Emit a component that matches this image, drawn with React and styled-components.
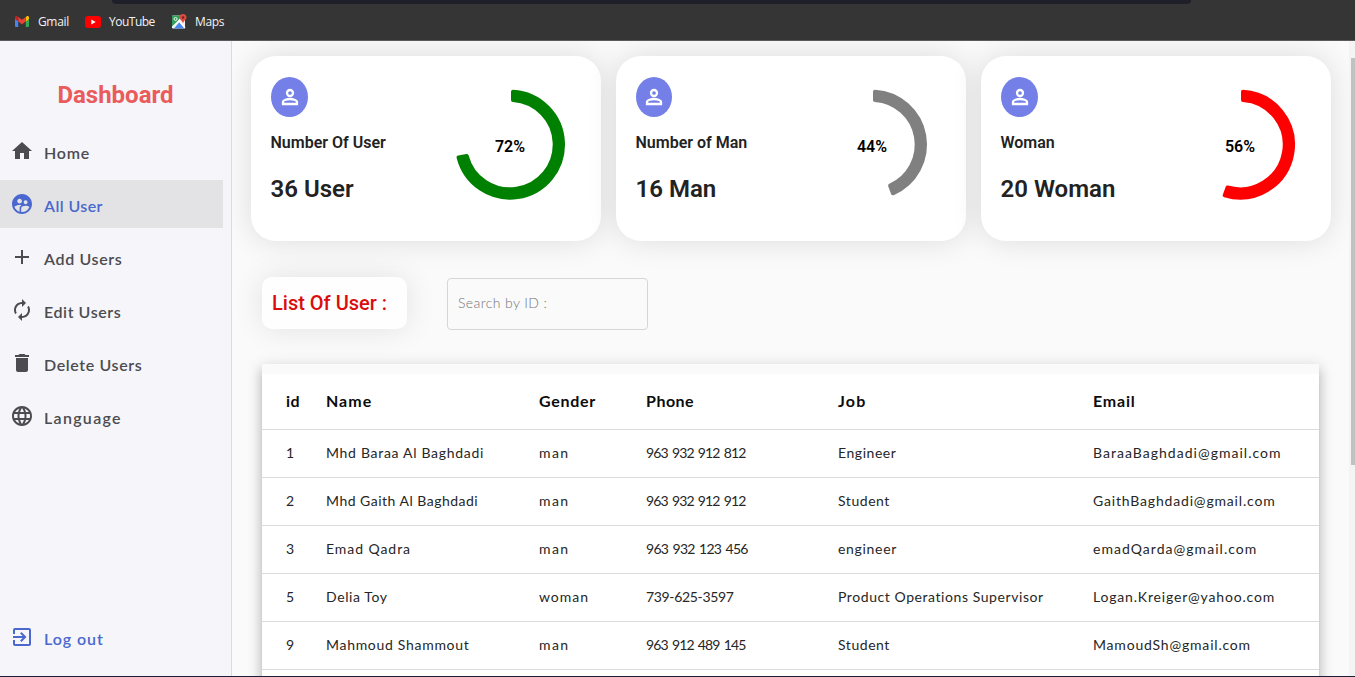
import React from 'react';
import styled, { createGlobalStyle } from 'styled-components';
import {
  MdHome,
  MdSupervisedUserCircle,
  MdAdd,
  MdAutorenew,
  MdDelete,
  MdLanguage,
  MdExitToApp,
} from 'react-icons/md';

const GlobalStyle = createGlobalStyle`
  *, *::before, *::after { box-sizing: border-box; }
  body {
    margin: 0;
    overflow: hidden;
    background: #fafafa;
    font-family: Lato, "Liberation Sans", sans-serif;
  }
`;

const Page = styled.div`
  height: 677px;
  display: flex;
  flex-direction: column;
  border-bottom: 1px solid #1d1d36;
`;

/* Browser chrome */

const BookmarksBar = styled.header`
  flex: none;
  height: 41px;
  display: flex;
  flex-direction: column;
  background: #353535;
  border-bottom: 1px solid #5c585b;
`;

const AddressEdge = styled.div`
  height: 4px;
  margin: 0 164px 0 112px;
  background: #1f1f29;
  border-radius: 0 0 8px 8px;
`;

const Bookmarks = styled.nav`
  display: flex;
  align-items: center;
  height: 35px;
  padding-left: 15px;
`;

const Bookmark = styled.div`
  display: flex;
  align-items: center;
  width: ${(p) => p.$width}px;
  color: #f3f3f3;
  font: 400 12px/16px "Open Sans", sans-serif;
  letter-spacing: ${(p) => p.$spacing}px;
  white-space: nowrap;

  svg {
    flex: none;
    margin-right: ${(p) => p.$gap}px;
  }
`;

/* Sidebar */

const Body = styled.div`
  flex: 1;
  min-height: 0;
  display: flex;
`;

const Sidebar = styled.aside`
  flex: none;
  width: 232px;
  display: flex;
  flex-direction: column;
  background: #f5f5fa;
  border-right: 1px solid #dbdbde;
`;

const Brand = styled.h1`
  margin: 39px 0 16px;
  text-align: center;
  color: #ea5c5c;
  font: 700 24px/31px Roboto, sans-serif;
`;

const Menu = styled.nav`
  display: flex;
  flex-direction: column;
  gap: 5px;
`;

const MenuItem = styled.a`
  flex: none;
  display: flex;
  align-items: center;
  width: 223px;
  height: 48px;
  padding-left: 10px;
  gap: 10px;
  background: ${(p) => (p.$active ? '#e3e3e5' : 'transparent')};
  color: ${(p) => (p.$accent ? '#4a68cf' : '#4c4c50')};
  font-weight: 600;
  font-size: 16px;
  line-height: 24px;
  letter-spacing: ${(p) => p.$spacing}px;

  svg {
    flex: none;
    width: 24px;
    height: 24px;
  }

  span {
    padding-top: 4px;
  }
`;

const LogoutSlot = styled.div`
  margin-top: auto;
  margin-bottom: 15px;
`;

/* Content */

const Content = styled.main`
  flex: 1;
  min-width: 0;
  overflow: hidden;
  padding: 15px 18px 0 19px;
`;

const Cards = styled.section`
  display: flex;
  gap: 15px;
`;

const Card = styled.article`
  flex: none;
  width: 350px;
  height: 185px;
  display: flex;
  justify-content: space-between;
  padding: 21px 0 0 20px;
  background: #fff;
  border-radius: 25px;
  box-shadow: 0 0 30px rgba(0, 0, 0, 0.12);
`;

const CardInfo = styled.div`
  display: flex;
  flex-direction: column;
  align-items: flex-start;
  color: #222;
  font-family: Roboto, sans-serif;
`;

const Avatar = styled.div`
  width: ${(p) => p.$width}px;
  height: 40px;
  display: flex;
  align-items: center;
  justify-content: center;
  border-radius: 50%;
  background: #7480e8;
  color: #fff;
`;

const CardLabel = styled.h2`
  margin: 16px 0 0 -0.5px;
  font-size: 16px;
  line-height: 20px;
  font-weight: 600;
  letter-spacing: 0;
`;

const CardValue = styled.p`
  margin: 21px 0 0 -0.5px;
  font-size: 24px;
  line-height: 30px;
  font-weight: 600;
`;

const Donut = styled.svg`
  flex: none;
  width: 120px;
  height: 120px;
  margin: 8px ${(p) => p.$right}px 0 0;

  path {
    stroke-width: 4;
    stroke-linejoin: round;
  }

  text {
    font: 600 16px Roboto, sans-serif;
    text-anchor: middle;
  }
`;

const Toolbar = styled.section`
  display: flex;
  align-items: flex-start;
  gap: 40px;
  padding: 36px 0 0 11px;
`;

const ListTitle = styled.h2`
  margin: 0;
  width: 145px;
  height: 52px;
  padding-left: 10px;
  background: #fefefe;
  border-radius: 10px;
  box-shadow: 0 0 30px rgba(0, 0, 0, 0.1);
  color: #da0c0c;
  font: 500 20px/52px Roboto, sans-serif;
  white-space: nowrap;
`;

const SearchInput = styled.input`
  width: 201px;
  height: 52px;
  margin-top: 1px;
  padding: 0 10px 3px;
  border: 1px solid #d6d6d6;
  border-radius: 4px;
  background: transparent;
  font: 300 14px Lato, sans-serif;
  letter-spacing: 0.4px;

  &::placeholder {
    color: #757575;
    opacity: 1;
  }
`;

const TableWrap = styled.section`
  width: 1057px;
  margin: 34px 0 0 11px;
  padding-top: 10px;
  background: #fafafa;
  box-shadow:
    0 5px 5px -3px rgba(0, 0, 0, 0.2),
    0 8px 10px 1px rgba(0, 0, 0, 0.14),
    0 3px 14px 2px rgba(0, 0, 0, 0.12);
`;

const Row = styled.div`
  display: grid;
  grid-template-columns: 40px 213px 107px 192px 255px 1fr;
  align-items: center;
  height: ${(p) => (p.$head ? 56 : 48)}px;
  padding: 0 0 2px 24px;
  background: #fff;
  border-bottom: 1px solid #dcdcdc;
  color: ${(p) => (p.$head ? '#0c0c0c' : '#262626')};
  font-size: ${(p) => (p.$head ? 16 : 14)}px;
  font-weight: ${(p) => (p.$head ? 700 : 400)};
  line-height: 20px;
  white-space: nowrap;
`;

const Cell = styled.span`
  letter-spacing: ${(p) => p.$spacing}px;
  word-spacing: ${(p) => p.$words || 0}px;
`;

const Scrollbar = styled.div`
  flex: none;
  width: 6px;
  padding: 17px 0 0 2px;
  background: #f4f4f4;
`;

const ScrollThumb = styled.div`
  height: 407px;
  background: #c1c1c1;
`;

const GmailIcon = () => (
  <svg width="14" height="11" viewBox="0 0 14 11">
    <path d="M0 1.500V10a1 1 0 0 0 1 1h2.200V4.800z" fill="#4285f4" />
    <path d="M10.800 11H13a1 1 0 0 0 1-1V1.500l-3.200 3.300z" fill="#34a853" />
    <path d="M10.800.9v4.500L14 3V1.500C14 .1 12.500-.4 11.500.4z" fill="#fbbc04" />
    <path d="M3.200 5.400V.9L7 3.800 10.800.9v4.500L7 8.300z" fill="#ea4335" />
    <path d="M0 1.500V3l3.200 2.400V.9L2.500.4C1.500-.4 0 .1 0 1.500z" fill="#c5221f" />
  </svg>
);

const YouTubeIcon = () => (
  <svg width="16" height="12" viewBox="0 0 16 12">
    <rect width="16" height="12" rx="3" fill="#f00" />
    <path d="M6.300 3.500v5L10.700 6z" fill="#fff" />
  </svg>
);

const MapsIcon = () => (
  <svg width="15" height="15" viewBox="0 0 15 15">
    <rect y="1.500" width="13" height="13" rx="1" fill="#f2f2f2" />
    <path d="M0 13V2.500a1 1 0 0 1 1-1h9L1 13.500z" fill="#2fa05a" />
    <path d="M2 14.500L7.500 8l5 6.500z" fill="#4a86ef" />
    <path d="M0 13.500L11 3M7.500 7.500l5.500 6.500" stroke="#fff" strokeWidth="1.300" />
    <circle cx="3.600" cy="5" r="1.500" fill="none" stroke="#fff" strokeWidth="0.900" />
    <path d="M11 0a3.500 3.500 0 0 0-3.500 3.500C7.500 6 10.500 6.500 11 9.500c.5-3 3.500-3.500 3.500-6A3.500 3.500 0 0 0 11 0z" fill="#dd4b3e" />
    <circle cx="11" cy="3.500" r="1.200" fill="#7d1f18" />
  </svg>
);

const PersonIcon = () => (
  <svg width="24" height="24" viewBox="0 0 24 24" fill="none" stroke="currentColor" strokeWidth="2.300">
    <circle cx="12" cy="8" r="3" />
    <path d="M5 17v2h14v-2c0-2-4.500-3-7-3s-7 1-7 3z" />
  </svg>
);

const OUTER = 53;
const INNER = 44.7;
const PAD = 3;

/* Ring segment from 12 o'clock, with a constant gap at both straight ends. */
function segmentPath(percent) {
  const sweep = (percent / 100) * Math.PI * 2;
  const point = (radius, angle) =>
    `${60 + radius * Math.sin(angle)} ${60 - radius * Math.cos(angle)}`;
  const outerPad = Math.asin(PAD / OUTER);
  const innerPad = Math.asin(PAD / INNER);
  const large = percent > 50 ? 1 : 0;
  return [
    `M${point(OUTER, outerPad)}`,
    `A${OUTER} ${OUTER} 0 ${large} 1 ${point(OUTER, sweep - outerPad)}`,
    `L${point(INNER, sweep - innerPad)}`,
    `A${INNER} ${INNER} 0 ${large} 0 ${point(INNER, innerPad)}Z`,
  ].join(' ');
}

const stats = [
  { label: 'Number Of User', value: '36 User', percent: 72, color: '#008000', right: 31, avatar: 37 },
  { label: 'Number of Man', value: '16 Man', percent: 44.44, color: '#808080', right: 34, avatar: 36 },
  { label: 'Woman', value: '20 Woman', percent: 55.56, color: '#ff0000', right: 31, avatar: 37 },
];

const menu = [
  { label: 'Home', Icon: MdHome, spacing: 0.8 },
  { label: 'All User', Icon: MdSupervisedUserCircle, spacing: 0.42, active: true },
  { label: 'Add Users', Icon: MdAdd, spacing: 0.65 },
  { label: 'Edit Users', Icon: MdAutorenew, spacing: 0.58 },
  { label: 'Delete Users', Icon: MdDelete, spacing: 0.62 },
  { label: 'Language', Icon: MdLanguage, spacing: 1.3 },
];

const columns = [
  ['id', 0.4], ['Name', 1], ['Gender', 0.7], ['Phone', 0.5], ['Job', 1.2], ['Email', 0.8],
];

/* Each cell holds its text, its tracking and, for the phones, its word spacing. */
const users = [
  [['1', 0], ['Mhd Baraa Al Baghdadi', 0.7], ['man', 1.4], ['963 932 912 812', -0.86, 1.4], ['Engineer', 0.55], ['BaraaBaghdadi@gmail.com', 1.02]],
  [['2', 0], ['Mhd Gaith Al Baghdadi', 0.49], ['man', 1.4], ['963 932 912 912', -0.86, 1.4], ['Student', 0.55], ['GaithBaghdadi@gmail.com', 0.82]],
  [['3', 0], ['Emad Qadra', 0.94], ['man', 1.4], ['963 932 123 456', -0.71, 1.4], ['engineer', 0.68], ['emadQarda@gmail.com', 1.04]],
  [['5', 0], ['Delia Toy', 0.6], ['woman', 0.97], ['739-625-3597', -0.34], ['Product Operations Supervisor', 0.57], ['Logan.Kreiger@yahoo.com', 0.82]],
  [['9', 0], ['Mahmoud Shammout', 0.7], ['man', 1.4], ['963 912 489 145', -0.86, 1.4], ['Student', 0.55], ['MamoudSh@gmail.com', 0.8]],
];

function StatCard({ label, value, percent, color, right, avatar }) {
  return (
    <Card>
      <CardInfo>
        <Avatar $width={avatar}><PersonIcon /></Avatar>
        <CardLabel>{label}</CardLabel>
        <CardValue>{value}</CardValue>
      </CardInfo>
      <Donut $right={right} viewBox="0 0.4 120 120">
        <path d={segmentPath(percent)} fill={color} stroke={color} />
        <text x="60" y="67.500">{Math.round(percent)}%</text>
      </Donut>
    </Card>
  );
}

export default function App() {
  return (
    <Page>
      <GlobalStyle />
      <BookmarksBar>
        <AddressEdge />
        <Bookmarks>
          <Bookmark $width={70} $gap={9} $spacing={-0.35}><GmailIcon />Gmail</Bookmark>
          <Bookmark $width={87} $gap={8} $spacing={-0.5}><YouTubeIcon />YouTube</Bookmark>
          <Bookmark $width={60} $gap={8} $spacing={-0.35}><MapsIcon />Maps</Bookmark>
        </Bookmarks>
      </BookmarksBar>
      <Body>
        <Sidebar>
          <Brand>Dashboard</Brand>
          <Menu>
            {menu.map(({ label, Icon, spacing, active }) => (
              <MenuItem key={label} $active={active} $accent={active} $spacing={spacing}>
                <Icon />
                <span>{label}</span>
              </MenuItem>
            ))}
          </Menu>
          <LogoutSlot>
            <MenuItem $accent $spacing={0.95}>
              <MdExitToApp />
              <span>Log out</span>
            </MenuItem>
          </LogoutSlot>
        </Sidebar>
        <Content>
          <Cards>
            {stats.map((s) => <StatCard key={s.label} {...s} />)}
          </Cards>
          <Toolbar>
            <ListTitle>List Of User :</ListTitle>
            <SearchInput placeholder="Search by ID :" />
          </Toolbar>
          <TableWrap>
            <Row $head>
              {columns.map(([text, spacing]) => (
                <Cell key={text} $spacing={spacing}>{text}</Cell>
              ))}
            </Row>
            {users.map((cells) => (
              <Row key={cells[0][0]}>
                {cells.map(([text, spacing, words], i) => (
                  <Cell key={i} $spacing={spacing} $words={words}>{text}</Cell>
                ))}
              </Row>
            ))}
            <Row />
          </TableWrap>
        </Content>
        <Scrollbar><ScrollThumb /></Scrollbar>
      </Body>
    </Page>
  );
}
